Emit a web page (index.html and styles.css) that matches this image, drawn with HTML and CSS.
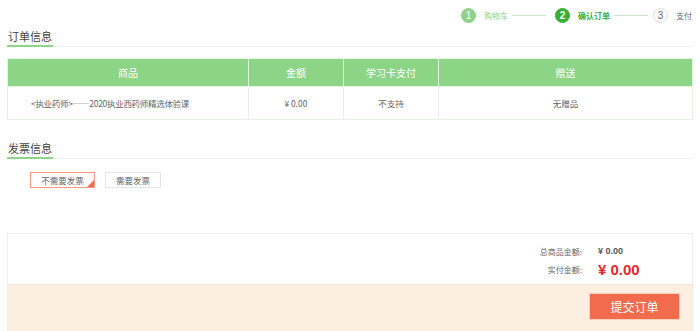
FILE: index.html
```html
<!DOCTYPE html>
<html lang="zh-CN">
<head>
    <meta charset="UTF-8">
    <title>确认订单</title>
    <link rel="stylesheet" href="styles.css">
</head>
<body>
    <div class="page">
        <!-- Steps -->
        <div class="steps">
            <div class="step done"><span class="num">1</span><span class="label">购物车</span></div>
            <span class="step-line"></span>
            <div class="step active"><span class="num">2</span><span class="label">确认订单</span></div>
            <span class="step-line"></span>
            <div class="step"><span class="num">3</span><span class="label">支付</span></div>
        </div>

        <!-- Order info -->
        <div class="section-title"><span>订单信息</span></div>
        <table class="order-table">
            <thead>
                <tr>
                    <th class="col-name">商品</th>
                    <th class="col-price">金额</th>
                    <th class="col-card">学习卡支付</th>
                    <th>赠送</th>
                </tr>
            </thead>
            <tbody>
                <tr>
                    <td class="name">&lt;执业药师&gt;——2020执业西药师精选体验课</td>
                    <td>¥ 0.00</td>
                    <td>不支持</td>
                    <td>无赠品</td>
                </tr>
            </tbody>
        </table>

        <!-- Invoice -->
        <div class="section-title invoice-title"><span>发票信息</span></div>
        <div class="invoice-opts">
            <button class="opt selected">不需要发票</button>
            <button class="opt">需要发票</button>
        </div>

        <!-- Summary -->
        <div class="summary">
            <div class="totals">
                <div class="row"><span class="key">总商品金额:</span><span class="val">¥ 0.00</span></div>
                <div class="row"><span class="key">实付金额:</span><span class="val pay">¥ 0.00</span></div>
            </div>
            <div class="submit-bar">
                <button class="submit-btn">提交订单</button>
            </div>
        </div>
    </div>
</body>
</html>
```

FILE: styles.css
```css
* {
    margin: 0;
    padding: 0;
    box-sizing: border-box;
}
body {
    font-family: "Noto Sans CJK SC", "Liberation Sans", sans-serif;
    background: #fff;
    color: #555;
    font-size: 11px;
}
.page {
    padding: 0 7px;
}
.steps {
    display: flex;
    justify-content: flex-end;
    align-items: center;
    height: 28px;
    padding-top: 3px;
    margin-right: 1px;
}
.step {
    display: flex;
    align-items: center;
}
.step .num {
    width: 15px;
    height: 15px;
    border-radius: 50%;
    border: 1px solid #ddd;
    display: flex;
    align-items: center;
    justify-content: center;
    font-size: 10px;
    color: #666;
    background: #fff;
    font-family: "Liberation Sans", sans-serif;
}
.step .label {
    margin-left: 8px;
    font-size: 8px;
    color: #666;
}
.step.done .num {
    background: #8fd38a;
    border-color: #8fd38a;
    color: #fff;
}
.step.done .label {
    color: #8fd38a;
}
.step.active .num {
    background: #3aae33;
    border-color: #3aae33;
    color: #fff;
    font-weight: bold;
}
.step.active .label {
    color: #3aae33;
    font-weight: bold;
}
.step-line {
    width: 34px;
    height: 1px;
    background: #c8e8c5;
    margin: 0 5px 0 4px;
}
.step-line + .step.active {
    margin-left: 4px;
}
.section-title {
    border-bottom: 1px solid #eee;
    height: 19px;
}
.section-title span {
    display: inline-block;
    width: 46px;
    font-size: 11px;
    color: #444;
    line-height: 16px;
    height: 19px;
    padding-left: 1px;
    border-bottom: 2px solid #8fd38a;
}
.order-table {
    width: 100%;
    border-collapse: collapse;
    margin-top: 11px;
    text-align: center;
}
.order-table th {
    background: #8cd486;
    color: #fff;
    font-weight: normal;
    font-size: 10px;
    height: 28px;
    border: 1px solid #e4f3e2;
}
.order-table td {
    height: 33px;
    border: 1px solid #e4f3e2;
    font-size: 8.5px;
    color: #666;
}
.order-table td.name {
    text-align: left;
    padding-left: 23px;
    letter-spacing: -0.3px;
}
.col-name { width: 241px; }
.col-price { width: 95px; }
.col-card { width: 95px; }
.invoice-title {
    margin-top: 20px;
}
.invoice-opts {
    display: flex;
    gap: 10px;
    padding: 13px 0 0 23px;
}
.opt {
    position: relative;
    height: 16px;
    width: 56px;
    font-family: inherit;
    font-size: 8.5px;
    color: #666;
    background: #fff;
    border: 1px solid #e5e5e5;
}
.opt.selected {
    width: 65px;
    border-color: #f49a84;
}
.opt.selected::after {
    content: "";
    position: absolute;
    right: 0;
    bottom: 0;
    border-left: 7px solid transparent;
    border-bottom: 7px solid #f06c4d;
}
.summary {
    margin-top: 45px;
    border: 1px solid #eee;
}
.totals {
    height: 50px;
    padding-top: 8px;
    background: #fff;
}
.totals .row {
    display: flex;
    justify-content: flex-end;
    align-items: center;
    height: 18px;
    padding-right: 50px;
}
.totals .key {
    font-size: 8px;
    color: #666;
    text-align: right;
}
.totals .val {
    width: 44px;
    margin-left: 16px;
    font-size: 9px;
    font-weight: bold;
    color: #555;
    white-space: nowrap;
    font-family: "Liberation Sans", sans-serif;
}
.totals .val.pay {
    font-size: 15px;
    color: #e8262b;
}
.submit-bar {
    display: flex;
    justify-content: flex-end;
    background: #fdeee2;
    border-top: 1px solid #f8e2d2;
    height: 47px;
    padding: 8px 12px 0 0;
}
.submit-btn {
    width: 91px;
    height: 27px;
    background: #f26b4c;
    color: #fff;
    border: 1px solid #f5d0c0;
    font-family: inherit;
    font-size: 12px;
}
```
